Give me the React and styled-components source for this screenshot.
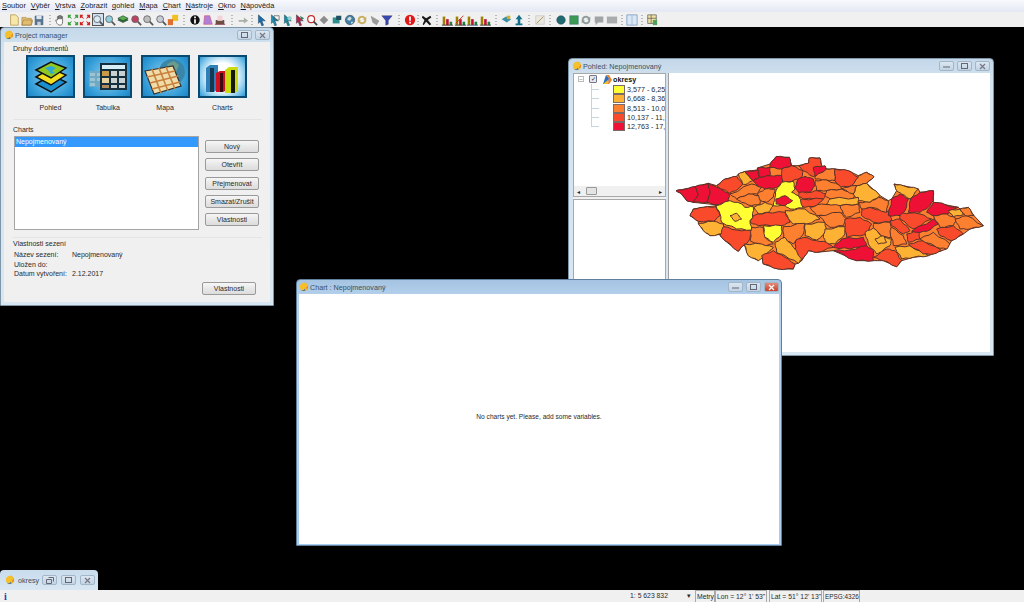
import React from "react";
import styled, { createGlobalStyle, css } from "styled-components";

const GlobalStyle = createGlobalStyle`
  html, body { margin: 0; padding: 0; background: #000; overflow: hidden; }
  * { box-sizing: border-box; }
  body { font-family: "Liberation Sans", Arial, sans-serif; font-size: 7.2px; color: #2a2a2a; }
`;

const Y = "#ffff33", A = "#fdb233", B = "#fd8030", C = "#fa4a2c", R = "#ee1035";

const outline = "18,140 45,135 75,128 115,118 140,125 165,105 200,97 205,90 225,82 262,78 262,72 300,60 318,38 358,40 365,65 385,65 415,58 418,42 450,42 455,65 470,75 495,75 535,80 565,95 590,85 612,98 590,118 630,155 655,170 665,165 680,140 672,120 700,125 745,135 750,145 790,140 790,175 865,190 870,195 895,190 912,215 940,245 900,255 880,270 845,290 830,315 815,320 775,335 730,340 695,350 680,368 640,350 610,350 560,350 490,320 440,325 415,320 395,350 385,358 375,360 370,375 325,375 280,360 275,335 265,350 235,335 222,300 205,322 165,290 150,275 160,270 120,275 100,260 85,238 85,232 60,215 70,195 100,190 138,185 135,182 70,175 50,170 35,150";

// map districts, traced in 3x coordinates. yellow ones last, they sit on top in the picture
const districts = [
  [R, 18,140, 45,135, 75,128, 85,150, 70,175, 50,170, 35,150],
  [R, 75,128, 115,118, 120,150, 110,175, 70,175, 85,150],
  [R, 115,118, 140,130, 178,148, 175,175, 135,182, 110,175, 120,150],
  [C, 140,125, 165,105, 200,97, 218,120, 205,135, 178,148],
  [A, 205,90, 225,82, 248,110, 225,122, 218,120],
  [R, 225,85, 262,78, 268,100, 250,110],
  [R, 262,72, 300,70, 300,95, 270,100],
  [R, 300,60, 318,38, 358,40, 365,65, 335,75, 300,70],
  [R, 268,100, 300,95, 335,95, 338,115, 320,130, 285,135, 262,125, 250,110],
  [C, 335,75, 365,65, 400,80, 395,100, 365,112, 338,115, 335,95],
  [C, 385,65, 415,58, 418,42, 450,42, 455,65, 470,75, 430,98, 400,80],
  [R, 430,70, 465,65, 470,80, 435,98],
  [R, 375,130, 385,105, 405,97, 430,105, 435,125, 420,145, 385,145],
  [B, 470,75, 495,75, 495,110, 470,108, 435,105, 435,98],
  [C, 495,75, 535,80, 565,100, 545,125, 510,130, 495,110],
  [B, 565,95, 590,85, 612,98, 590,118, 560,125, 545,125, 565,100],
  [B, 435,110, 470,108, 510,125, 515,135, 470,140, 440,140],
  [C, 388,145, 420,145, 440,140, 470,150, 460,165, 400,165, 385,155],
  [C, 395,165, 460,165, 440,185, 405,190, 385,180],
  [B, 470,140, 515,135, 555,150, 550,165, 480,165, 465,155],
  [A, 560,125, 590,118, 630,155, 600,175, 565,170, 550,150],
  [B, 515,135, 545,125, 560,125, 550,150],
  [B, 180,150, 245,120, 275,130, 260,150, 235,150, 200,165],
  [B, 200,165, 235,150, 270,155, 270,180, 245,185, 215,175],
  [B, 262,150, 285,135, 315,135, 310,160, 290,175, 272,170],
  [A, 252,190, 285,175, 310,185, 295,205, 265,210],
  [C, 70,195, 100,190, 138,188, 150,215, 130,232, 85,232, 60,215],
  [A, 85,238, 130,232, 160,240, 160,270, 120,275, 100,260],
  [C, 160,248, 200,258, 245,260, 240,285, 205,322, 165,290, 150,275],
  [C, 250,215, 290,205, 345,205, 360,235, 335,245, 265,245, 240,235],
  [B, 245,250, 280,250, 285,280, 310,300, 280,305, 240,290],
  [A, 345,200, 405,195, 450,225, 410,240, 370,240, 355,225],
  [B, 340,248, 405,238, 400,270, 370,300, 340,285],
  [A, 405,240, 465,235, 470,265, 440,288, 405,275],
  [B, 420,190, 455,180, 510,180, 520,205, 480,215, 440,215],
  [A, 480,165, 565,160, 565,180, 510,185, 470,180],
  [B, 510,185, 565,180, 570,205, 530,220, 520,210],
  [B, 445,215, 510,205, 530,225, 520,245, 480,250],
  [A, 465,255, 525,248, 525,270, 495,300, 470,298, 460,280],
  [C, 525,225, 570,220, 605,240, 590,270, 530,280, 525,250],
  [C, 575,195, 600,190, 660,205, 665,235, 610,235, 575,215],
  [B, 565,175, 600,175, 625,160, 655,170, 650,205, 605,190, 575,195],
  [B, 610,238, 660,235, 665,280, 635,278, 610,250],
  [C, 378,288, 400,280, 440,290, 470,295, 490,310, 440,325, 415,320, 395,350, 375,320],
  [A, 315,295, 345,280, 370,310, 395,345, 385,358, 345,335, 320,325],
  [A, 222,300, 275,300, 310,310, 295,325, 265,350, 235,335],
  [C, 275,335, 310,320, 345,340, 375,360, 370,375, 325,375, 280,360],
  [R, 490,310, 515,285, 580,280, 590,305, 540,315],
  [R, 490,320, 540,318, 590,305, 610,320, 610,350, 560,350],
  [A, 585,265, 610,252, 640,280, 665,285, 660,305, 620,330, 595,300],
  [A, 615,285, 640,275, 650,295, 625,300],
  [C, 610,340, 650,315, 675,320, 695,350, 680,368, 640,350],
  [A, 675,310, 720,305, 775,335, 730,340, 695,345],
  [B, 660,260, 665,250, 700,275, 710,300, 670,305],
  [C, 660,230, 690,225, 720,260, 700,270, 665,245],
  [C, 715,300, 760,290, 815,320, 790,330, 760,330],
  [B, 750,285, 790,265, 840,300, 830,315, 800,310],
  [C, 710,270, 745,260, 750,285, 715,295],
  [C, 690,205, 750,210, 785,225, 730,255, 690,225],
  [R, 725,262, 790,225, 805,240, 770,262, 740,265],
  [C, 800,255, 850,245, 880,270, 845,290, 810,275],
  [R, 655,215, 665,165, 690,150, 715,165, 705,200, 690,215],
  [A, 672,120, 700,125, 745,135, 720,165, 695,150, 680,140],
  [R, 715,205, 722,165, 750,145, 790,140, 790,170, 775,190, 750,205],
  [R, 770,205, 790,175, 865,190, 830,210, 790,215],
  [B, 790,215, 830,210, 860,225, 850,245, 810,250],
  [B, 855,225, 890,215, 940,245, 900,255, 870,255],
  [A, 835,200, 870,195, 880,212, 850,218],
  [B, 870,195, 895,190, 912,215, 885,215],
  [Y, 318,140, 335,115, 370,112, 375,135, 365,145, 385,155, 400,192, 360,195, 345,185, 310,185, 315,160],
  [R, 318,165, 345,155, 368,170, 345,185, 318,180],
  [Y, 138,185, 180,170, 215,180, 225,190, 250,188, 248,220, 240,230, 245,258, 200,255, 155,235, 150,210],
  [A, 180,215, 200,208, 215,225, 195,232],
  [Y, 280,245, 335,245, 335,270, 310,295, 285,280],
];

// adds small teeth to an edge
const roughen = (pts) => {
  const out = [];
  for (let i = 0; i < pts.length; i += 2) {
    const ax = pts[i], ay = pts[i + 1];
    const bx = pts[(i + 2) % pts.length], by = pts[(i + 3) % pts.length];
    const seed = Math.abs(ax * 7 + ay * 13 + bx * 7 + by * 13);
    const nx = -(by - ay) * 0.04, ny = (bx - ax) * 0.04;
    const s1 = seed % 2 ? 1 : -1;
    out.push(`${ax},${ay}`);
    out.push(`${ax + (bx - ax) * 0.33 + nx * s1},${ay + (by - ay) * 0.33 + ny * s1}`);
    out.push(`${ax + (bx - ax) * 0.66 - nx * s1},${ay + (by - ay) * 0.66 - ny * s1}`);
  }
  return out.join(" ");
};

const MapDrawing = () => (
  <MapSvg viewBox="0 0 960 405">
    <polygon fill={B} points={outline} stroke="#5b3328" strokeWidth="3" strokeLinejoin="round" />
    {districts.map(([fill, ...pts], i) => (
      <polygon key={i} fill={fill} points={roughen(pts)} stroke="#5b3328" strokeWidth="3" strokeLinejoin="round" />
    ))}
  </MapSvg>
);

const Lens = ({ c }) => (
  <>
    <circle cx="6" cy="6" r="4" fill={c} stroke="#666" />
    <path d="M9 9l4 4" stroke="#555" strokeWidth="2" />
  </>
);
const Bars = ({ c }) => (
  <>
    <path d="M2 3h3v10H2z" fill="#a08000" />
    <path d="M6 6h3v7H6z" fill="#c01030" />
    <path d="M10 9h3v4h-3z" fill="#208040" />
    <path d="M1 13h13" stroke={c} />
  </>
);
const Cursor = ({ c }) => <path d="M4 1l8 7H8l2 5-2 1-2-5-2 2z" fill={c} stroke="#134" strokeWidth=".5" />;
const Ball = ({ c }) => <circle cx="7" cy="7" r="5" fill={c} stroke="#345" strokeWidth=".6" />;

const icons = {
  page: <path d="M3 1h6l3 3v9H3z" fill="#f7e7a8" stroke="#b8a060" />,
  open: <path d="M1 4h5l1 1h5v8H1z M3 7h11l-2 6H1z" fill="#e2bd70" stroke="#97753a" strokeWidth=".6" />,
  save: <><path d="M2 2h10v11H2z" fill="#56728e" /><path d="M4 2h6v4H4z" fill="#dfe6ee" /><path d="M5 9h4v4H5z" fill="#c8d0d8" /></>,
  hand: <path d="M4 7V3h1.5v3V2H7v4-4h1.5v4V3H10v6c0 3-1 4-3 4s-3-1-4-3l-1-3z" fill="#fff" stroke="#444" strokeWidth=".8" />,
  full: <path d="M1 1h4L3.8 2.5 6 6 3 4 1 5zM13 1v4l-2-1-3 2 2-3-1-2zM1 13V9l2 1 3-2-2 3 1 2zM13 13H9l1-2-2-3 3 2 2-1z" fill="#3d9f3d" />,
  fullRed: <path d="M1 1h4L3.8 2.5 6 6 3 4 1 5zM13 1v4l-2-1-3 2 2-3-1-2zM1 13V9l2 1 3-2-2 3 1 2zM13 13H9l1-2-2-3 3 2 2-1z" fill="#d02020" />,
  zoomIn: <Lens c="#d8ecf6" />,
  zoomOut: <Lens c="#8fd0e0" />,
  layers: <><path d="M1 7l6-3 6 3-6 3z" fill="#2f7d2f" stroke="#123" strokeWidth=".6" /><path d="M1 5l6-3 6 3-6 3z" fill="#59b04a" stroke="#123" strokeWidth=".6" /></>,
  lensRed: <Lens c="#c04060" />,
  lensGray: <Lens c="#bcbcbc" />,
  lensFade: <Lens c="#c8ccd8" />,
  tag: <><path d="M6 1h7v7H6z" fill="#f0c020" /><path d="M1 6h6v7H1z" fill="#e07030" /></>,
  info: <><circle cx="7" cy="7" r="5.5" fill="#111" /><path d="M6 6h2v5H6zM6 3h2v2H6z" fill="#fff" /></>,
  select: <path d="M3 2h6l3 10H2z" fill="#b080d8" stroke="#d05070" strokeWidth=".7" />,
  print: <><path d="M2 7h10v5H2z" fill="#6a5040" /><path d="M4 2h6v6H4z" fill="#f4d0d8" /><path d="M1 12h12" stroke="#8a3050" /></>,
  pan: <path d="M2 7h6V4l5 4-5 3V9H2z" fill="#a8b0a8" />,
  cursor: <Cursor c="#1a6db0" />,
  cursorA: <><Cursor c="#2090b0" /><path d="M7 2h6v5H7z" fill="none" stroke="#444" strokeWidth=".7" /></>,
  cursorB: <><Cursor c="#1a8ca0" /><circle cx="10" cy="5" r="2.5" fill="#90d0d0" /></>,
  cursorC: <><Cursor c="#c02040" /><path d="M8 2l5 3-3 2z" fill="#308060" /></>,
  lensRing: <><circle cx="6" cy="6" r="4" fill="#fff" stroke="#c03030" strokeWidth="1.4" /><path d="M9 9l4 4" stroke="#444" strokeWidth="2" /></>,
  hex: <path d="M7 2l5 5-5 5-5-5z" fill="#8c8c8c" />,
  pin: <><path d="M2 4h8v7H2z" fill="#2f8f8f" /><path d="M6 2h6v5H6z" fill="#205060" /></>,
  globe: <><circle cx="7" cy="7" r="5.5" fill="#3f7fa0" stroke="#234" strokeWidth=".6" /><path d="M4 5l3-2 2 2-2 3-3-1zM8 9h3l-2 3z" fill="#d0dce0" /></>,
  swap: <path d="M2 7a5 5 0 0 1 9-3l1-1v4H8l1.500-1.200A3 3 0 0 0 4 7zM12 7a5 5 0 0 1-9 3l-1 1V7h4L4.500 8.200A3 3 0 0 0 10 7z" fill="#c8b060" />,
  wedge: <path d="M2 2l10 6-3 5-5-3z" fill="#9a9a9a" />,
  filter: <path d="M1 2h12L8.500 7.500V12l-3 1V7.500z" fill="#3848b8" stroke="#223" strokeWidth=".4" />,
  stop: <><circle cx="7" cy="7" r="6" fill="#e01818" /><path d="M6 3h2v5H6zM6 9h2v2H6z" fill="#fff" /></>,
  tools: <path d="M2 2l4 3 5-3 1 2-4 3 4 5-2 1-4-4-3 4-1-1 2-5-3-3z" fill="#1a1a1a" />,
  bars1: <Bars c="#333" />,
  bars2: <><Bars c="#333" /><path d="M2 11l9-9" stroke="#d02020" /></>,
  bars3: <Bars c="#357" />,
  share: <><path d="M2 6l5-3 6 3-5 4z" fill="#3a8fa8" /><path d="M8 2h4v4H8z" fill="#d0b030" /></>,
  up: <path d="M7 1l4 5H8.500v5H11v2H3v-2h2.500V6H3z" fill="#13708a" />,
  measure: <><path d="M2 2h10v10H2z" fill="#e8e8e0" stroke="#bbb" strokeWidth=".6" /><path d="M3 11l8-8" stroke="#b08a50" /></>,
  ball: <Ball c="#1d6a70" />,
  square: <path d="M2 2h10v10H2z" fill="#3c9a55" stroke="#267" strokeWidth=".5" />,
  refresh: <path d="M2 7a5 5 0 0 1 9-3l1-1v4H8l1.500-1.200A3 3 0 0 0 4 7zM12 7a5 5 0 0 1-9 3l-1 1V7h4L4.500 8.200A3 3 0 0 0 10 7z" fill="#909c9c" />,
  bubble: <path d="M2 3h10v7H6l-3 3v-3H2z" fill="#a0a4a4" />,
  card: <path d="M1 3h12v8H1z" fill="#a8acac" />,
  panel: <><path d="M1 1h12v12H1z" fill="#d8e6f6" stroke="#7f9fc0" /><path d="M7 1v12" stroke="#9fb8d0" /></>,
  grid: <><path d="M2 1h10v10H2z" fill="#f0e0a0" stroke="#555" strokeWidth=".8" /><path d="M2 5h10M6 1v10" stroke="#555" strokeWidth=".8" /><path d="M8 7h5v6H8z" fill="#50a060" /></>,
};

const toolGroups = [
  { w: 8, items: ["page", "open", "save"] },
  { w: 8, items: ["hand", "full", "fullRed", "zoomIn", "zoomOut", "layers", "lensRed", "lensGray", "lensFade", "tag"] },
  { w: 9, items: ["info", "select", "print"] },
  { w: 10, items: ["pan"] },
  { w: 6, items: ["cursor", "cursorA", "cursorB", "cursorC", "lensRing", "hex", "pin", "globe", "swap", "wedge", "filter"] },
  { w: 10, items: ["stop"] },
  { w: 4, items: ["tools"] },
  { w: 8, items: ["bars1", "bars2", "bars3", "bars1"] },
  { w: 9, items: ["share", "up"] },
  { w: 8, items: ["measure"] },
  { w: 9, items: ["ball", "square", "refresh", "bubble", "card"] },
  { w: 8, items: ["panel"] },
  { w: 7, items: ["grid"] },
];

const menus = ["Soubor", "Výběr", "Vrstva", "Zobrazit", "gohled", "Mapa", "Chart", "Nástroje", "Okno", "Nápověda"];
const legend = [
  [Y, "3,577 - 6,258"],
  [A, "6,668 - 8,362"],
  [B, "8,513 - 10,066"],
  [C, "10,137 - 11,930"],
  [R, "12,763 - 17,910"],
];
const chartButtons = ["Nový", "Otevřít", "Přejmenovat", "Smazat/Zrušit", "Vlastnosti"];

const AppLogo = () => (
  <LogoSvg viewBox="0 0 12 12">
    <circle cx="6" cy="6" r="5" fill="#f5c02a" />
    <path d="M6 1a5 5 0 0 1 4 8L8 7a3 3 0 0 0-2-6z" fill="#e8862a" />
    <path d="M2 9q3 2 5-1l1 2q-3 2-6-1z" fill="#3b6fb5" />
  </LogoSvg>
);

const Controls = ({ active, onlyTwo }) => (
  <ControlRow>
    {!onlyTwo && <Ctl><svg width="7" height="4"><path d="M0 3h7" stroke="#667" /></svg></Ctl>}
    <Ctl><svg width="7" height="6"><rect x=".5" y=".5" width="6" height="5" fill="none" stroke="#667" /></svg></Ctl>
    <Ctl $close={active}><svg width="7" height="7"><path d="M1 1l5 5M6 1l-5 5" stroke={active ? "#fff" : "#778"} strokeWidth="1.200" /></svg></Ctl>
  </ControlRow>
);

const TileLayers = () => (
  <svg width="36" height="34" viewBox="0 0 36 34">
    <path d="M3 24l15-9 15 7-15 10z" fill="#1a8fd0" stroke="#111" strokeWidth="1.500" />
    <path d="M3 17l15-9 15 7-15 10z" fill="#f2e020" stroke="#111" strokeWidth="1.500" />
    <path d="M3 10L18 2l15 6-15 10z" fill="#8ec820" stroke="#111" strokeWidth="1.500" />
    <path d="M12 8l6-2 5 2-4 3 3 2-4 1-2-3z" fill="#2faad8" />
  </svg>
);
const TileTable = () => (
  <svg width="38" height="30" viewBox="0 0 38 30">
    <path d="M0 9h14v16H0z" fill="#6fa9c4" />
    <path d="M1 11h5v3H1zM8 11h5v3H8zM1 16h5v3H1zM8 16h5v3H8zM1 21h5v3H1z" fill="#9cc4d4" />
    <path d="M11 1h27v27H11z" fill="#14303f" />
    <path d="M13 3h23v4H13z" fill="#d8eef6" />
    <path d="M13 9h7v5h-7z" fill="#c89a48" />
    <path d="M13 16h7v5h-7z" fill="#e6d0a0" />
    <path d="M13 23h7v3h-7z" fill="#b08a60" />
    <path d="M22 9h6v5h-6zM30 9h6v5h-6zM22 16h6v5h-6zM30 16h6v5h-6zM22 23h6v3h-6zM30 23h6v3h-6z" fill="#c8d0d0" />
  </svg>
);
const TileMap = () => (
  <svg width="44" height="38" viewBox="0 0 44 38">
    <circle cx="29" cy="14" r="13" fill="#3a86a8" />
    <path d="M24 6l7-3 5 4-3 7-6 1zM30 18l6-1-3 7z" fill="#6c9c8c" />
    <path d="M2 13L30 8l8 20-27 8z" fill="#f0dca8" stroke="#333" strokeWidth="1.200" />
    <path d="M9 11l9 24M16 10l9 23M23 9l9 22M4 19l28-6M7 25l28-7M9 31l28-7" stroke="#c8803c" strokeWidth="1.600" />
  </svg>
);
const TileBars = () => (
  <svg width="36" height="34" viewBox="0 0 36 34">
    <path d="M2 8l4-3h8v24l-4 3H2z" fill="#2f7fb8" />
    <path d="M6 8h4v24H6z" fill="#14384f" />
    <path d="M12 13l4-2h7v19l-4 2h-7z" fill="#d01020" />
    <path d="M16 13h3v19h-3z" fill="#400810" />
    <path d="M21 10l4-3h9v24l-4 2h-9z" fill="#c8dc10" />
    <path d="M27 10h4v23h-4z" fill="#181808" />
  </svg>
);

const tiles = [
  ["Pohled", <TileLayers />, false],
  ["Tabulka", <TileTable />, false],
  ["Mapa", <TileMap />, false],
  ["Charts", <TileBars />, true],
];

export default function App() {
  return (
    <Page>
      <GlobalStyle />
      <MenuBar>
        {menus.map((m) => (
          <MenuItem key={m}><u>{m[0]}</u>{m.slice(1)}</MenuItem>
        ))}
      </MenuBar>
      <ToolBar>
        {toolGroups.map((g, i) => (
          <React.Fragment key={i}>
            <ToolGap $w={g.w} $first={i === 0} />
            {g.items.map((name, j) => (
              <ToolBtn key={j} $on={name === "zoomIn"}>
                <svg width="12" height="12" viewBox="0 0 14 14">{icons[name]}</svg>
              </ToolBtn>
            ))}
          </React.Fragment>
        ))}
      </ToolBar>

      <Desktop>
        <Win $x={0} $y={0} $w={274} $h={279}>
          <TitleBar>
            <AppLogo />
            <TitleText>Project manager</TitleText>
            <Controls onlyTwo />
          </TitleBar>
          <PmBody>
            <GroupLabel>Druhy dokumentů</GroupLabel>
            <TileRow>
              {tiles.map(([name, art, light]) => (
                <Tile key={name}>
                  <TileFace $light={light}>{art}</TileFace>
                  <span>{name}</span>
                </Tile>
              ))}
            </TileRow>
            <Rule />
            <GroupLabel>Charts</GroupLabel>
            <ListRow>
              <ListBox>
                <ListItem>Nepojmenovaný</ListItem>
              </ListBox>
              <ButtonCol>
                {chartButtons.map((b) => <PmButton key={b}>{b}</PmButton>)}
              </ButtonCol>
            </ListRow>
            <Rule $tight />
            <GroupLabel>Vlastnosti sezení</GroupLabel>
            <InfoGrid>
              <span>Název sezení:</span><span>Nepojmenovaný</span>
              <span>Uložen do:</span><span></span>
              <span>Datum vytvoření:</span><span>2.12.2017</span>
            </InfoGrid>
            <PropsRow><PmButton>Vlastnosti</PmButton></PropsRow>
          </PmBody>
        </Win>

        <Win $x={568} $y={31} $w={426} $h={298}>
          <TitleBar>
            <AppLogo />
            <TitleText>Pohled: Nepojmenovaný</TitleText>
            <Controls />
          </TitleBar>
          <ViewBody>
            <Side>
              <TreePane>
                <LayerRow>
                  <Expander>−</Expander>
                  <Check>✓</Check>
                  <svg width="9" height="9" viewBox="0 0 9 9">
                    <path d="M0 9L3 0l3 3-1 6z" fill="#2f6fc0" />
                    <path d="M3 0h3l3 5-3 4H5l1-6z" fill="#f08020" />
                    <path d="M0 9l5-4v4z" fill="#f0c020" />
                  </svg>
                  <LayerName>okresy</LayerName>
                </LayerRow>
                <LegendList>
                  {legend.map(([c, t]) => (
                    <LegendRow key={t}>
                      <Swatch $c={c} />
                      <span>{t}</span>
                    </LegendRow>
                  ))}
                </LegendList>
                <Scroll>
                  <ScrollArrow>◂</ScrollArrow>
                  <ScrollThumb />
                  <ScrollArrow>▸</ScrollArrow>
                </Scroll>
              </TreePane>
              <LowerPane />
            </Side>
            <MapPane><MapDrawing /></MapPane>
          </ViewBody>
        </Win>

        <Win $x={296} $y={252} $w={486} $h={267} $active>
          <TitleBar>
            <AppLogo />
            <TitleText>Chart : Nepojmenovaný</TitleText>
            <Controls active />
          </TitleBar>
          <ChartBody>No charts yet. Please, add some variables.</ChartBody>
        </Win>

        <MiniWin>
          <AppLogo />
          <TitleText>okresy</TitleText>
          <MiniBtns>
            <Ctl><svg width="8" height="7"><path d="M.5 2.500h5v4h-5zM2.500.5h5v4" fill="none" stroke="#667" /></svg></Ctl>
            <Ctl><svg width="7" height="6"><rect x=".5" y=".5" width="6" height="5" fill="none" stroke="#667" /></svg></Ctl>
            <Ctl><svg width="7" height="7"><path d="M1 1l5 5M6 1l-5 5" stroke="#778" strokeWidth="1.200" /></svg></Ctl>
          </MiniBtns>
        </MiniWin>
      </Desktop>

      <StatusBar>
        <InfoMark>i</InfoMark>
        <Scale><span>1:</span><span>5 623 832</span><Arrow>▾</Arrow></Scale>
        <Cell $w={20}>Metry</Cell>
        <Cell $w={52}>Lon = 12° 1' 53"</Cell>
        <Cell $w={53} $ml={2}>Lat = 51° 12' 13"</Cell>
        <Cell $w={37} $ml={1} $small>EPSG:4326</Cell>
      </StatusBar>
    </Page>
  );
}

const Page = styled.div`
  width: 1024px;
  height: 602px;
  display: flex;
  flex-direction: column;
  background: #000;
  overflow: hidden;
`;

const MenuBar = styled.div`
  height: 12px;
  display: flex;
  align-items: center;
  gap: 4.9px;
  padding-left: 2px;
  background: linear-gradient(#f8f9fd, #e4e8f4);
`;

const MenuItem = styled.span`
  font-size: 7.4px;
  line-height: 12px;
  color: #1a1a1a;
`;

const ToolBar = styled.div`
  height: 15px;
  display: flex;
  align-items: center;
  background: #f0f0f0;
`;

const ToolGap = styled.div`
  width: ${(p) => p.$w}px;
  height: 11px;
  flex: none;
  ${(p) => !p.$first && css`
    background: radial-gradient(circle, #b8b8b8 0.6px, transparent 0.7px) center top / 2px 3px repeat-y;
  `}
`;

const ToolBtn = styled.div`
  width: 12.6px;
  height: 13px;
  flex: none;
  display: flex;
  align-items: center;
  justify-content: center;
  ${(p) => p.$on && css`
    background: #cfe2f5;
    outline: 1px solid #555;
    outline-offset: -1px;
  `}
`;

const Desktop = styled.div`
  flex: 1;
  position: relative;
  background: #000;
`;

const Win = styled.div`
  position: absolute;
  left: ${(p) => p.$x}px;
  top: ${(p) => p.$y}px;
  width: ${(p) => p.$w}px;
  height: ${(p) => p.$h}px;
  display: flex;
  flex-direction: column;
  padding: ${(p) => (p.$active ? "0 2px 1px" : "0 3px 3px")};
  border: 1px solid ${(p) => (p.$active ? "#5f7f9c" : "#7f95a8")};
  border-radius: 4px 4px 0 0;
  background: ${(p) => (p.$active
    ? "linear-gradient(#a5c4e2, #b9d4ee 8%, #a8cdf0)"
    : "linear-gradient(#c4d8ea, #d4e3f0 8%, #d9e7f3)")};
`;

const TitleBar = styled.div`
  height: 14px;
  flex: none;
  display: flex;
  align-items: center;
`;

const LogoSvg = styled.svg`
  width: 10px;
  height: 10px;
  flex: none;
`;

const TitleText = styled.span`
  flex: 1;
  padding-left: 1px;
  font-size: 7.2px;
  color: #3d4f60;
`;

const ControlRow = styled.div`
  display: flex;
  gap: 3px;
`;

const Ctl = styled.div`
  width: 15px;
  height: 10px;
  display: flex;
  align-items: center;
  justify-content: center;
  border: 1px solid #a2b6c8;
  border-radius: 2px;
  background: ${(p) => (p.$close
    ? "linear-gradient(#e58a78, #c8402c)"
    : "linear-gradient(#dbe7f1, #c2d4e3)")};
`;

const PmBody = styled.div`
  flex: 1;
  display: flex;
  flex-direction: column;
  padding: 2px 8px 0 9px;
  background: #f0f0f0;
`;

const GroupLabel = styled.div`
  font-size: 7px;
  line-height: 10px;
  color: #2a2a2a;
`;

const TileRow = styled.div`
  display: flex;
  gap: 8.3px;
  padding: 1px 0 0 13px;
`;

const Tile = styled.div`
  width: 49px;
  display: flex;
  flex-direction: column;
  align-items: center;
  gap: 5px;
  font-size: 7px;
  line-height: 10px;
`;

const TileFace = styled.div`
  width: 49px;
  height: 43px;
  display: flex;
  align-items: center;
  justify-content: center;
  border: 2px solid #0b4a70;
  background: ${(p) => (p.$light
    ? "radial-gradient(circle, #fff 45%, #7cc4ea 80%, #2f9ad6)"
    : "radial-gradient(circle, #8ed0f0, #2f9ad6 75%, #1f85c4)")};
`;

const Rule = styled.div`
  height: 1px;
  flex: none;
  margin: ${(p) => (p.$tight ? "7px 0 1px" : "6px 0 5px")};
  background: #e4e4e4;
`;

const ListRow = styled.div`
  display: flex;
  gap: 6px;
  padding-left: 1px;
  margin-top: 1px;
`;

const ListBox = styled.div`
  width: 185px;
  height: 94px;
  border: 1px solid #a4a4a4;
  background: #fff;
`;

const ListItem = styled.div`
  height: 10px;
  font-size: 7px;
  line-height: 10px;
  padding-left: 1px;
  color: #fff;
  background: #3399ff;
`;

const ButtonCol = styled.div`
  display: flex;
  flex-direction: column;
  gap: 5.3px;
  padding-top: 4px;
`;

const PmButton = styled.button`
  width: 54px;
  height: 13px;
  padding: 0;
  border: 1px solid #9a9a9a;
  border-radius: 2px;
  font-family: inherit;
  font-size: 7px;
  color: #2a2a2a;
  background: linear-gradient(#f6f6f6, #e8e8e8 50%, #dcdcdc);
`;

const InfoGrid = styled.div`
  display: grid;
  grid-template-columns: 58px 1fr;
  grid-auto-rows: 9.6px;
  padding: 1px 0 0 1px;
  font-size: 7px;
  line-height: 10px;
`;

const PropsRow = styled.div`
  display: flex;
  justify-content: flex-end;
  padding: 3px 6px 0 0;
`;

const ViewBody = styled.div`
  flex: 1;
  min-height: 0;
  display: flex;
  gap: 2px;
  padding-left: 1px;
`;

const Side = styled.div`
  width: 93px;
  display: flex;
  flex-direction: column;
  gap: 2px;
  background: #f0f0f0;
`;

const TreePane = styled.div`
  height: 124px;
  display: flex;
  flex-direction: column;
  border: 1px solid #a8a8a8;
  background: #fff;
  overflow: hidden;
`;

const LayerRow = styled.div`
  height: 10px;
  display: flex;
  align-items: center;
  padding-left: 4px;
  gap: 3px;
  font-size: 7.2px;
  color: #111;
`;

const LayerName = styled.b`
  margin-left: -2px;
`;

const Expander = styled.div`
  width: 6px;
  height: 6px;
  border: 1px solid #bbb;
  font-size: 6px;
  line-height: 4px;
  text-align: center;
  margin-right: 2px;
  color: #667;
`;

const Check = styled.div`
  width: 8px;
  height: 8px;
  border: 1px solid #778;
  border-radius: 1px;
  background: #e4e8ee;
  font-size: 6px;
  line-height: 6px;
  text-align: center;
  color: #223;
  margin-right: 3px;
`;

const LegendList = styled.div`
  flex: 1;
  display: flex;
  flex-direction: column;
  padding: 1px 0 0 39px;
  background: linear-gradient(#c8d4dc, #c8d4dc) 17px 0 / 1px 42px no-repeat;
`;

const LegendRow = styled.div`
  height: 9.3px;
  display: flex;
  align-items: center;
  gap: 2px;
  font-size: 7.2px;
  white-space: nowrap;
  color: #2a2a2a;
  position: relative;
  &::before {
    content: "";
    position: absolute;
    left: -22px;
    top: 4px;
    width: 8px;
    height: 1px;
    background: #c8d4dc;
  }
`;

const Swatch = styled.div`
  width: 12px;
  height: 9px;
  flex: none;
  border: 1px solid #7a6a6a;
  background: ${(p) => p.$c};
`;

const Scroll = styled.div`
  height: 10px;
  flex: none;
  display: flex;
  align-items: center;
  padding: 0 3px;
  background: #f0f0f0;
`;

const ScrollArrow = styled.span`
  font-size: 6px;
  color: #222;
  &:last-child { margin-left: auto; }
`;

const ScrollThumb = styled.div`
  width: 11px;
  height: 8px;
  margin-left: 6px;
  border: 1px solid #999;
  border-radius: 1px;
  background: #e4e4e4;
`;

const LowerPane = styled.div`
  flex: 1;
  border: 1px solid #a8a8a8;
  background: #fff;
`;

const MapPane = styled.div`
  flex: 1;
  padding: 71px 0 0 1px;
  border-left: 1px solid #a0a0a0;
  background: #fff;
`;

const MapSvg = styled.svg`
  display: block;
  width: 320px;
  height: 135px;
`;

const ChartBody = styled.div`
  flex: 1;
  display: flex;
  align-items: center;
  justify-content: center;
  padding-bottom: 6px;
  font-size: 6.6px;
  color: #2a2a2a;
  background: #fff;
`;

const MiniWin = styled.div`
  position: absolute;
  left: 0;
  bottom: 0;
  width: 98px;
  height: 20px;
  display: flex;
  align-items: center;
  gap: 2px;
  padding: 0 3px 0 5px;
  border-radius: 4px 4px 0 0;
  background: linear-gradient(#c8dcec, #d9e7f3);
`;

const MiniBtns = styled.div`
  display: flex;
  gap: 4px;
`;

const StatusBar = styled.div`
  height: 12px;
  flex: none;
  display: flex;
  align-items: center;
  padding-left: 4px;
  font-size: 6.8px;
  color: #2a2a2a;
  background: #f0f0f0;
`;

const InfoMark = styled.b`
  width: 626px;
  color: #1a3fb0;
  font-family: "Liberation Serif", serif;
  font-size: 10px;
`;

const Scale = styled.div`
  width: 65px;
  display: flex;
  gap: 2px;
`;

const Arrow = styled.span`
  margin-left: auto;
  margin-right: 4px;
`;

const Cell = styled.div`
  width: ${(p) => p.$w}px;
  margin-left: ${(p) => p.$ml || 0}px;
  height: 12px;
  line-height: 11px;
  white-space: nowrap;
  overflow: hidden;
  padding-left: 1px;
  font-size: ${(p) => (p.$small ? "6.4px" : "6.8px")};
  border: 1px solid #a8a8a8;
  border-bottom: none;
`;
